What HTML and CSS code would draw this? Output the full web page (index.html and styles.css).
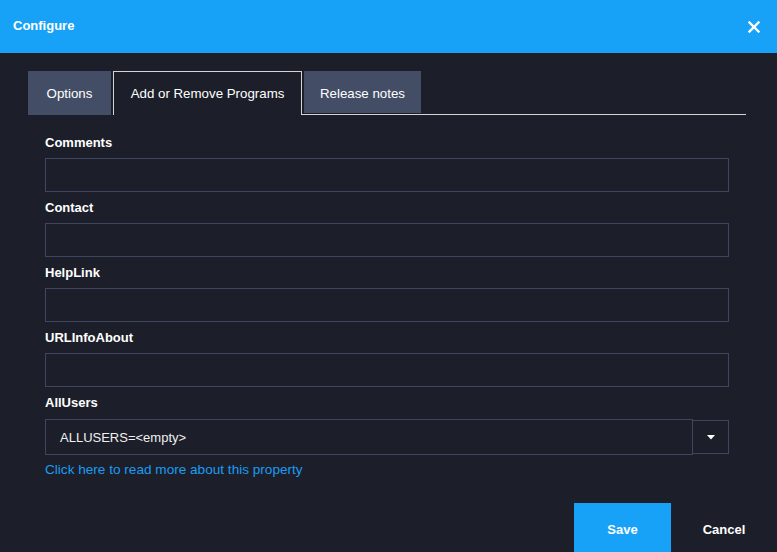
FILE: index.html
```html
<!DOCTYPE html>
<html>
<head>
<meta charset="utf-8">
<link rel="stylesheet" href="styles.css">
</head>
<body>
<div class="dialog">
  <div class="header">
    <span class="title">Configure</span>
    <svg class="close" width="12" height="12" viewBox="0 0 12 12"><path d="M1.5 1.5L10.5 10.5M10.5 1.5L1.5 10.5" stroke="#fff" stroke-width="2.4" stroke-linecap="square"/></svg>
  </div>
  <div class="main">
    <div class="tabs">
      <div class="tab inactive">Options</div>
      <div class="tab active">Add or Remove Programs</div>
      <div class="tabs-rest">
        <div class="tab inactive release">Release notes</div>
      </div>
    </div>
    <div class="form">
      <div class="field">
        <div class="label">Comments</div>
        <div class="input"></div>
      </div>
      <div class="field">
        <div class="label">Contact</div>
        <div class="input"></div>
      </div>
      <div class="field">
        <div class="label">HelpLink</div>
        <div class="input"></div>
      </div>
      <div class="field">
        <div class="label">URLInfoAbout</div>
        <div class="input"></div>
      </div>
      <div class="field">
        <div class="label">AllUsers</div>
        <div class="select-row">
          <div class="select">ALLUSERS=&lt;empty&gt;</div>
          <div class="select-btn"><svg width="8" height="5" viewBox="0 0 8 5"><path d="M0 0H8L4 4.5Z" fill="#fff"/></svg></div>
        </div>
        <div class="link">Click here to read more about this property</div>
      </div>
    </div>
    <div class="footer">
      <div class="btn save">Save</div>
      <div class="btn cancel">Cancel</div>
    </div>
  </div>
</div>
</body>
</html>
```

FILE: styles.css
```css
html, body {
  margin: 0;
  padding: 0;
  background: #1c1f2a;
  font-family: "Liberation Sans", Arial, sans-serif;
  color: #fff;
}
.dialog {
  width: 777px;
  height: 552px;
  overflow: hidden;
  display: flex;
  flex-direction: column;
}
.header {
  height: 53px;
  background: #17a2f8;
  display: flex;
  align-items: center;
  justify-content: space-between;
  padding: 0 17px 0 13px;
  flex-shrink: 0;
}
.title {
  font-weight: bold;
  font-size: 13px;
  margin-top: -2px;
}
.close {
  display: block;
}
.main {
  padding: 18px 31px 0 28px;
  flex: 1;
  display: flex;
  flex-direction: column;
}
.tabs {
  display: flex;
  height: 44px;
}
.tab {
  font-size: 13.3px;
  display: flex;
  align-items: center;
  justify-content: center;
  box-sizing: border-box;
  color: #fff;
}
.tab.inactive {
  background: #434e66;
}
.tabs > .inactive {
  width: 83px;
  height: 44px;
  margin-right: 2px;
  padding-top: 1px;
}
.tab.active {
  width: 189px;
  height: 44px;
  border: 1px solid #d4d4d4;
  border-bottom: none;
}
.tabs-rest {
  flex: 1;
  display: flex;
  border-bottom: 1px solid #d4d4d4;
  padding-left: 2px;
}
.tab.release {
  width: 117px;
  height: 42px;
  padding-top: 3px;
}
.form {
  padding: 19px 17px 0 17px;
  display: flex;
  flex-direction: column;
}
.field {
  display: flex;
  flex-direction: column;
  margin-bottom: 7px;
}
.label {
  font-size: 13px;
  font-weight: bold;
  line-height: 18px;
  margin-bottom: 6px;
}
.input {
  height: 34px;
  box-sizing: border-box;
  border: 1px solid #3e475f;
}
.select-row {
  display: flex;
  align-items: center;
  margin-top: 1px;
}
.select {
  flex: 1;
  height: 36px;
  box-sizing: border-box;
  border: 1px solid #3e475f;
  font-size: 13px;
  color: #f0f0f0;
  display: flex;
  align-items: center;
  padding-left: 14px;
}
.select-btn {
  width: 37px;
  height: 34px;
  box-sizing: border-box;
  border: 1px solid #3e475f;
  margin-left: -1px;
  display: flex;
  align-items: center;
  justify-content: center;
}
.select-btn svg {
  display: block;
  margin-left: 1px;
}
.link {
  color: #1a9cf2;
  font-size: 13.6px;
  line-height: 18px;
  margin-top: 6px;
}
.footer {
  display: flex;
  justify-content: flex-end;
  margin-top: 17px;
  margin-right: -31px;
}
.btn {
  height: 50px;
  font-size: 13px;
  font-weight: bold;
  display: flex;
  align-items: center;
  justify-content: center;
  padding-top: 2px;
  box-sizing: border-box;
}
.save {
  width: 97px;
  background: #17a2f8;
}
.cancel {
  width: 106px;
}
```
